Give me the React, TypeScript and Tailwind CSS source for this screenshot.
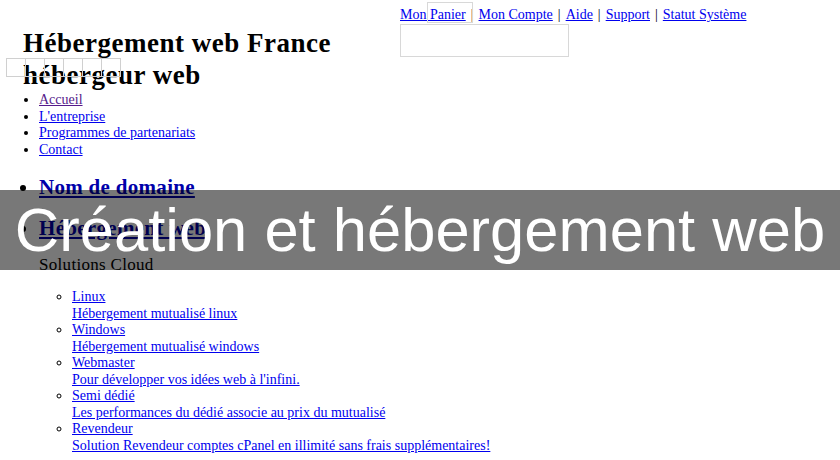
import React from "react";

const serif = { fontFamily: '"Liberation Serif", "DejaVu Serif", serif' };

function Sep() {
  return <span className="mx-[5px] text-black">|</span>;
}

export default function App() {
  const topLinks = ["Mon Panier", "Mon Compte", "Aide", "Support", "Statut Système"];
  const sub = [
    ["Linux", "Hébergement mutualisé linux"],
    ["Windows", "Hébergement mutualisé windows"],
    ["Webmaster", "Pour développer vos idées web à l'infini."],
    ["Semi dédié", "Les performances du dédié associe au prix du mutualisé"],
    ["Revendeur", "Solution Revendeur comptes cPanel en illimité sans frais supplémentaires!"],
  ];
  return (
    <div
      className="relative w-[840px] h-[460px] overflow-hidden bg-white text-black"
      style={serif}
    >
      {/* top nav */}
      <div className="pl-[400px] pt-[6px] text-[14px] leading-[18px]">
        {topLinks.map((l, i) => (
          <React.Fragment key={l}>
            {i > 0 && <Sep />}
            <a className="text-[#0000ee] underline">{l}</a>
          </React.Fragment>
        ))}
        <div className="w-[169px] h-[33px] border border-[#d8d8d8]" />
      </div>

      {/* heading */}
      <div className="pl-[23px] -mt-[30px]">
        <h1 className="text-[27px] font-bold leading-[32px] tracking-[0.5px]">
          Hébergement web France
          <br />
          hébergeur web
        </h1>
        <ul className="mt-[1px] pl-[16px] list-disc text-[14px] leading-[16.5px]">
          <li><a className="text-[#551a8b] underline">Accueil</a></li>
          <li><a className="text-[#0000ee] underline">L'entreprise</a></li>
          <li><a className="text-[#0000ee] underline">Programmes de partenariats</a></li>
          <li><a className="text-[#0000ee] underline">Contact</a></li>
        </ul>
        <ul className="mt-[16px] pl-[16px] list-disc">
          <li className="text-[21px] leading-[26px] font-bold">
            <a className="text-[#0000aa] underline tracking-[0.3px]">Nom de domaine</a>
          </li>
          <li className="text-[21px] leading-[26px] mt-[15px]">
            <a className="text-[#0000aa] underline font-bold tracking-[0.3px]">Hébergement web</a>
            <div className="text-[17px] leading-[20px] mt-[14px] text-black tracking-[0.3px]">
              Solutions Cloud
            </div>
            <ul className="mt-[14px] pl-[33px] list-[circle] text-[14px] leading-[16.5px]">
              {sub.map(([a, b]) => (
                <li key={a}>
                  <a className="text-[#0000ee] underline">{a}</a>
                  <br />
                  <a className="text-[#0000ee] underline">{b}</a>
                </li>
              ))}
            </ul>
          </li>
        </ul>
      </div>

      {/* overlapping placeholders */}
      <div className="absolute left-[427px] top-[2px] w-[46px] h-[21px] border border-[#d8d8d8]" />
      <div className="absolute left-[6px] top-[58px] flex">
        {[0, 1, 2, 3, 4, 5].map((i) => (
          <div key={i} className="w-[20px] h-[19px] -mr-px border border-[#d0d0d0]" />
        ))}
      </div>

      {/* overlay banner */}
      <div className="absolute left-0 top-[190px] w-[840px] h-[80px] bg-black/[0.53] flex items-center justify-center">
        <span
          className="text-white text-[61.5px] leading-none whitespace-nowrap"
          style={{ fontFamily: '"Liberation Sans", Arial, sans-serif' }}
        >
          Création et hébergement web
        </span>
      </div>
    </div>
  );
}
